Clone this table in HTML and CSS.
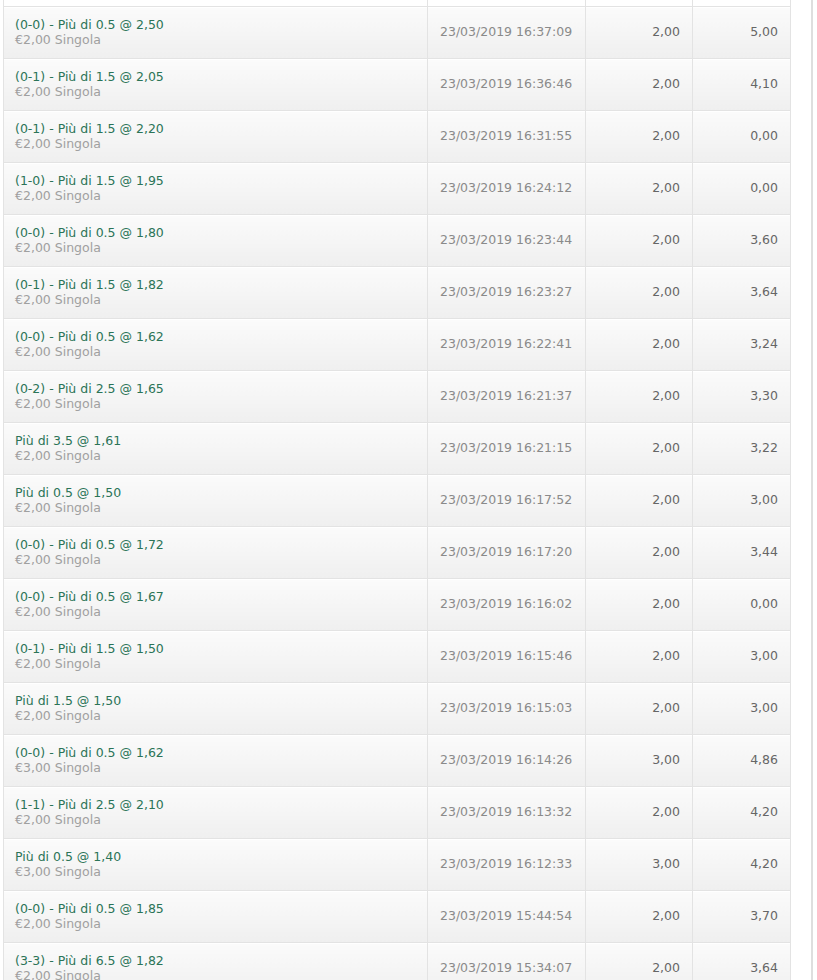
FILE: index.html
```html
<!DOCTYPE html>
<html lang="it">
<head>
    <meta charset="UTF-8">
    <meta name="viewport" content="width=device-width, initial-scale=1.0">
    <title>Storico giocate</title>
    <link rel="stylesheet" href="styles.css">
</head>
<body>
    <div class="page">
        <table class="bets">
            <colgroup>
                <col class="col-bet">
                <col class="col-date">
                <col class="col-stake">
                <col class="col-win">
            </colgroup>
            <tbody>
                <tr class="spacer"><td></td><td></td><td></td><td></td></tr>
                <tr>
                    <td class="bet"><span class="pick">(0-0) - Più di 0.5 @ 2,50</span><span class="type">€2,00 Singola</span></td>
                    <td class="date">23/03/2019 16:37:09</td>
                    <td class="num">2,00</td>
                    <td class="num">5,00</td>
                </tr>
                <tr>
                    <td class="bet"><span class="pick">(0-1) - Più di 1.5 @ 2,05</span><span class="type">€2,00 Singola</span></td>
                    <td class="date">23/03/2019 16:36:46</td>
                    <td class="num">2,00</td>
                    <td class="num">4,10</td>
                </tr>
                <tr>
                    <td class="bet"><span class="pick">(0-1) - Più di 1.5 @ 2,20</span><span class="type">€2,00 Singola</span></td>
                    <td class="date">23/03/2019 16:31:55</td>
                    <td class="num">2,00</td>
                    <td class="num">0,00</td>
                </tr>
                <tr>
                    <td class="bet"><span class="pick">(1-0) - Più di 1.5 @ 1,95</span><span class="type">€2,00 Singola</span></td>
                    <td class="date">23/03/2019 16:24:12</td>
                    <td class="num">2,00</td>
                    <td class="num">0,00</td>
                </tr>
                <tr>
                    <td class="bet"><span class="pick">(0-0) - Più di 0.5 @ 1,80</span><span class="type">€2,00 Singola</span></td>
                    <td class="date">23/03/2019 16:23:44</td>
                    <td class="num">2,00</td>
                    <td class="num">3,60</td>
                </tr>
                <tr>
                    <td class="bet"><span class="pick">(0-1) - Più di 1.5 @ 1,82</span><span class="type">€2,00 Singola</span></td>
                    <td class="date">23/03/2019 16:23:27</td>
                    <td class="num">2,00</td>
                    <td class="num">3,64</td>
                </tr>
                <tr>
                    <td class="bet"><span class="pick">(0-0) - Più di 0.5 @ 1,62</span><span class="type">€2,00 Singola</span></td>
                    <td class="date">23/03/2019 16:22:41</td>
                    <td class="num">2,00</td>
                    <td class="num">3,24</td>
                </tr>
                <tr>
                    <td class="bet"><span class="pick">(0-2) - Più di 2.5 @ 1,65</span><span class="type">€2,00 Singola</span></td>
                    <td class="date">23/03/2019 16:21:37</td>
                    <td class="num">2,00</td>
                    <td class="num">3,30</td>
                </tr>
                <tr>
                    <td class="bet"><span class="pick">Più di 3.5 @ 1,61</span><span class="type">€2,00 Singola</span></td>
                    <td class="date">23/03/2019 16:21:15</td>
                    <td class="num">2,00</td>
                    <td class="num">3,22</td>
                </tr>
                <tr>
                    <td class="bet"><span class="pick">Più di 0.5 @ 1,50</span><span class="type">€2,00 Singola</span></td>
                    <td class="date">23/03/2019 16:17:52</td>
                    <td class="num">2,00</td>
                    <td class="num">3,00</td>
                </tr>
                <tr>
                    <td class="bet"><span class="pick">(0-0) - Più di 0.5 @ 1,72</span><span class="type">€2,00 Singola</span></td>
                    <td class="date">23/03/2019 16:17:20</td>
                    <td class="num">2,00</td>
                    <td class="num">3,44</td>
                </tr>
                <tr>
                    <td class="bet"><span class="pick">(0-0) - Più di 0.5 @ 1,67</span><span class="type">€2,00 Singola</span></td>
                    <td class="date">23/03/2019 16:16:02</td>
                    <td class="num">2,00</td>
                    <td class="num">0,00</td>
                </tr>
                <tr>
                    <td class="bet"><span class="pick">(0-1) - Più di 1.5 @ 1,50</span><span class="type">€2,00 Singola</span></td>
                    <td class="date">23/03/2019 16:15:46</td>
                    <td class="num">2,00</td>
                    <td class="num">3,00</td>
                </tr>
                <tr>
                    <td class="bet"><span class="pick">Più di 1.5 @ 1,50</span><span class="type">€2,00 Singola</span></td>
                    <td class="date">23/03/2019 16:15:03</td>
                    <td class="num">2,00</td>
                    <td class="num">3,00</td>
                </tr>
                <tr>
                    <td class="bet"><span class="pick">(0-0) - Più di 0.5 @ 1,62</span><span class="type">€3,00 Singola</span></td>
                    <td class="date">23/03/2019 16:14:26</td>
                    <td class="num">3,00</td>
                    <td class="num">4,86</td>
                </tr>
                <tr>
                    <td class="bet"><span class="pick">(1-1) - Più di 2.5 @ 2,10</span><span class="type">€2,00 Singola</span></td>
                    <td class="date">23/03/2019 16:13:32</td>
                    <td class="num">2,00</td>
                    <td class="num">4,20</td>
                </tr>
                <tr>
                    <td class="bet"><span class="pick">Più di 0.5 @ 1,40</span><span class="type">€3,00 Singola</span></td>
                    <td class="date">23/03/2019 16:12:33</td>
                    <td class="num">3,00</td>
                    <td class="num">4,20</td>
                </tr>
                <tr>
                    <td class="bet"><span class="pick">(0-0) - Più di 0.5 @ 1,85</span><span class="type">€2,00 Singola</span></td>
                    <td class="date">23/03/2019 15:44:54</td>
                    <td class="num">2,00</td>
                    <td class="num">3,70</td>
                </tr>
                <tr>
                    <td class="bet"><span class="pick">(3-3) - Più di 6.5 @ 1,82</span><span class="type">€2,00 Singola</span></td>
                    <td class="date">23/03/2019 15:34:07</td>
                    <td class="num">2,00</td>
                    <td class="num">3,64</td>
                </tr>
            </tbody>
        </table>
    </div>
</body>
</html>
```

FILE: styles.css
```css
body {
    font-family: "DejaVu Sans", Verdana, sans-serif;
    font-size: 12.5px;
    background-color: #fff;
    margin: 0;
    padding: 0;
}
.page {
    width: 813px;
    min-height: 100vh;
    box-sizing: border-box;
    padding-left: 3px;
    border-right: 2px solid #dedede;
    overflow: hidden;
}
.bets {
    width: 787px;
    border-collapse: collapse;
    table-layout: fixed;
}
.col-bet {
    width: 424px;
}
.col-date {
    width: 158px;
}
.col-stake {
    width: 107px;
}
.col-win {
    width: 98px;
}
.bets td {
    height: 49px;
    padding: 0 12px 2px;
    border: 1px solid #e3e3e3;
    vertical-align: middle;
    background: linear-gradient(#fbfbfb, #efefef);
    box-shadow: inset 0 1px 0 #fff;
}
.bets .spacer td {
    height: 6px;
    padding: 0;
    border-top: none;
    background: #fff;
    box-shadow: none;
}
.bets .bet {
    padding: 0 11px 2px;
}
.pick,
.type {
    display: block;
    line-height: 15px;
    white-space: nowrap;
}
.pick {
    color: #2b7457;
}
.type {
    color: #a0a0a0;
}
.date {
    color: #8a8a8a;
}
.num {
    text-align: right;
    color: #666;
}
```
